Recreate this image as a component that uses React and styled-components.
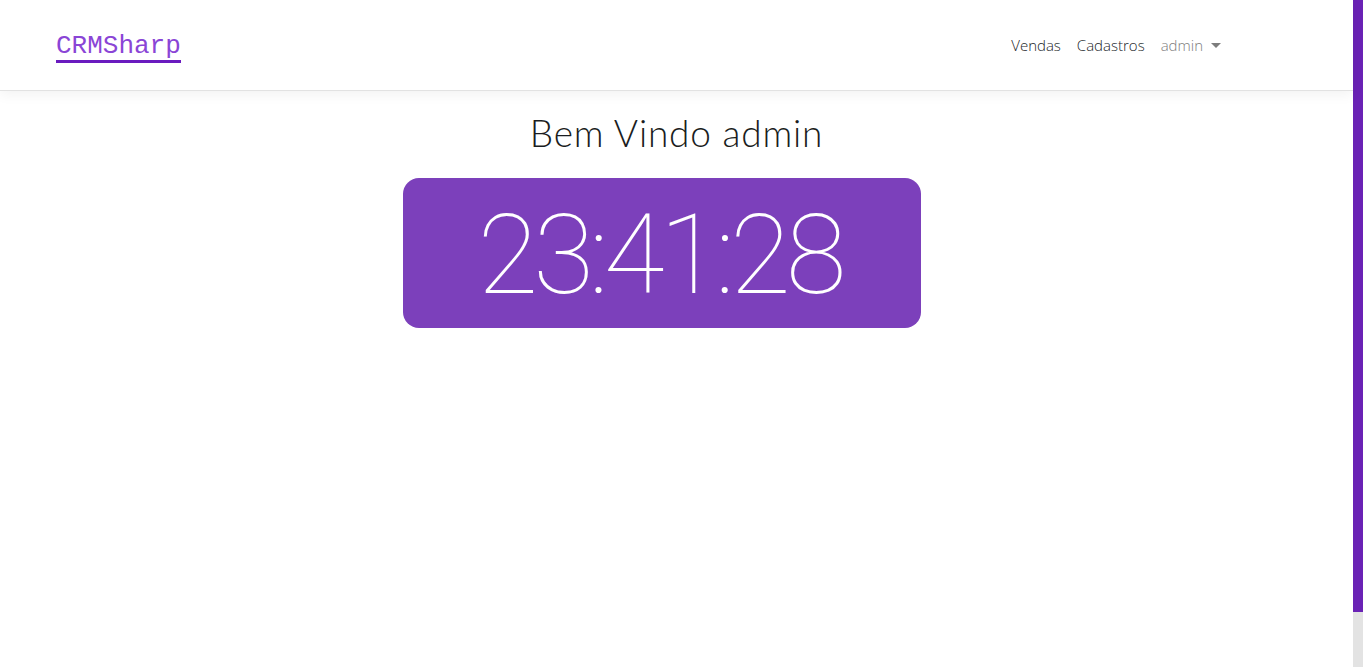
import React from "react";
import styled, { createGlobalStyle } from "styled-components";

const Global = createGlobalStyle`
  html, body { margin: 0; padding: 0; height: 100%; overflow: hidden; }
  body { background: #fff; font-family: "Open Sans", "Liberation Sans", sans-serif; }
  #root { height: 100%; }
`;

const Shell = styled.div`
  display: flex;
  height: 667px;
  width: 1363px;
`;

const Page = styled.div`
  flex: 1;
  display: flex;
  flex-direction: column;
  min-width: 0;
`;

const Rail = styled.div`
  width: 10px;
  display: flex;
  flex-direction: column;
  background: #e3e3e3;
`;

const Thumb = styled.div`
  height: 612px;
  background: #6a22b5;
`;

const NavBar = styled.header`
  height: 91px;
  box-sizing: border-box;
  border-bottom: 1px solid #e2e2e2;
  box-shadow: 0 4px 12px rgba(0, 0, 0, 0.05);
  display: flex;
  align-items: center;
  justify-content: space-between;
  padding: 0 124px 0 56px;
  position: relative;
  z-index: 1;
`;

const Brand = styled.a`
  font-family: "Liberation Mono", "Courier New", monospace;
  font-size: 26px;
  color: #8a45d6;
  text-decoration: none;
  border-bottom: 3px solid #6a1bbf;
  line-height: 27px;
  margin-top: 6px;
`;

const NavList = styled.nav`
  display: flex;
  align-items: center;
`;

const NavLink = styled.a`
  font-family: "Open Sans", sans-serif;
  font-weight: 300;
  font-size: 15px;
  color: ${(p) => (p.$muted ? "#7d7d7d" : "#212529")};
  padding: 8px;
  display: flex;
  align-items: center;
  text-decoration: none;
`;

const Caret = styled.span`
  display: inline-block;
  margin-left: 8px;
  width: 0;
  height: 0;
  border-left: 5px solid transparent;
  border-right: 5px solid transparent;
  border-top: 5px solid #7d7d7d;
`;

const Main = styled.main`
  display: flex;
  flex-direction: column;
  align-items: center;
  padding-top: 17px;
`;

const Title = styled.h1`
  margin: 0;
  font-family: "Lato", sans-serif;
  font-weight: 300;
  font-size: 37px;
  line-height: 50px;
  color: #1a1d21;
  letter-spacing: 0.8px;
`;

const ClockBox = styled.div`
  margin-top: 20px;
  margin-right: 29px;
  width: 518px;
  height: 150px;
  border-radius: 16px;
  background: #7c40bb;
  display: flex;
  align-items: center;
  justify-content: center;
`;

const Time = styled.span`
  font-family: "Roboto", sans-serif;
  font-weight: 100;
  font-size: 111px;
  line-height: 1;
  color: #fff;
  letter-spacing: -5px;
  margin-top: 4px;
  margin-left: -5px;
`;

export default function App() {
  return (
    <>
      <Global />
      <Shell>
        <Page>
          <NavBar>
            <Brand href="#">CRMSharp</Brand>
            <NavList>
              <NavLink href="#">Vendas</NavLink>
              <NavLink href="#">Cadastros</NavLink>
              <NavLink href="#" $muted>
                admin
                <Caret />
              </NavLink>
            </NavList>
          </NavBar>
          <Main>
            <Title>Bem Vindo admin</Title>
            <ClockBox>
              <Time>23:41:28</Time>
            </ClockBox>
          </Main>
        </Page>
        <Rail>
          <Thumb />
        </Rail>
      </Shell>
    </>
  );
}
